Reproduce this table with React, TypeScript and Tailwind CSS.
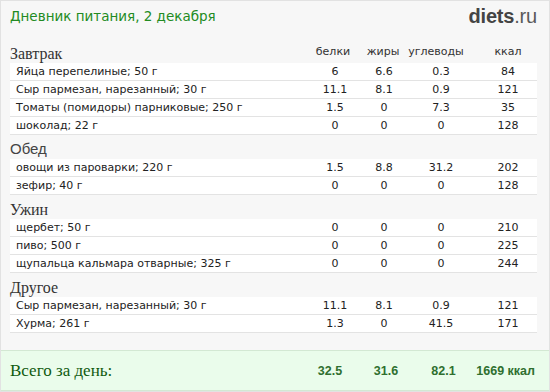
import React from "react";

type Row = { name: string; p: string; f: string; c: string; k: string };
type Section = { title: string; serif: boolean; rows: Row[]; head?: boolean };

const sections: Section[] = [
  {
    title: "Завтрак",
    serif: true,
    head: true,
    rows: [
      { name: "Яйца перепелиные; 50 г", p: "6", f: "6.6", c: "0.3", k: "84" },
      { name: "Сыр пармезан, нарезанный; 30 г", p: "11.1", f: "8.1", c: "0.9", k: "121" },
      { name: "Томаты (помидоры) парниковые; 250 г", p: "1.5", f: "0", c: "7.3", k: "35" },
      { name: "шоколад; 22 г", p: "0", f: "0", c: "0", k: "128" },
    ],
  },
  {
    title: "Обед",
    serif: false,
    rows: [
      { name: "овощи из пароварки; 220 г", p: "1.5", f: "8.8", c: "31.2", k: "202" },
      { name: "зефир; 40 г", p: "0", f: "0", c: "0", k: "128" },
    ],
  },
  {
    title: "Ужин",
    serif: true,
    rows: [
      { name: "щербет; 50 г", p: "0", f: "0", c: "0", k: "210" },
      { name: "пиво; 500 г", p: "0", f: "0", c: "0", k: "225" },
      { name: "щупальца кальмара отварные; 325 г", p: "0", f: "0", c: "0", k: "244" },
    ],
  },
  {
    title: "Другое",
    serif: true,
    rows: [
      { name: "Сыр пармезан, нарезанный; 30 г", p: "11.1", f: "8.1", c: "0.9", k: "121" },
      { name: "Хурма; 261 г", p: "1.3", f: "0", c: "41.5", k: "171" },
    ],
  },
];

const sans = { fontFamily: '"DejaVu Sans", Verdana, sans-serif' };
const arial = { fontFamily: '"Liberation Sans", Arial, sans-serif' };
const serif = { fontFamily: '"Liberation Serif", "Times New Roman", serif' };

export default function App() {
  return (
    <div className="w-[550px] h-[392px] border border-[#e2e2e2] bg-[#f7f7f7] flex flex-col overflow-hidden">
      <div className="h-[38px] flex items-start justify-between pl-[9px] pr-[12px]">
        <div className="text-[13.5px] leading-[18px] pt-[6px] text-[#228b22]" style={sans}>
          Дневник питания, 2 декабря
        </div>
        <div className="text-[20px] leading-[22px] pt-[4px] text-[#444] tracking-[-0.2px]" style={arial}>
          <span className="font-bold">diets</span>
          <span className="text-[#5a5a5a]">.ru</span>
        </div>
      </div>

      {sections.map((s) => (
        <div key={s.title} className="ml-[9px] mr-[12px] flex flex-col">
          <div className="h-[24px] flex items-end">
            <div
              className={
                s.serif
                  ? "flex-1 text-[16px] leading-[16px] text-[#333] pb-[1px]"
                  : "flex-1 text-[15px] leading-[16px] text-[#444] pb-[2px]"
              }
              style={s.serif ? serif : arial}
            >
              {s.title}
            </div>
            {s.head && (
              <div className="flex text-[11px] leading-[14px] text-[#333] pb-[4px]" style={sans}>
                <div className="w-[60px] text-center pr-[4px]">белки</div>
                <div className="w-[38px] text-center pr-[2px]">жиры</div>
                <div className="w-[76px] text-center pr-[10px]">углеводы</div>
                <div className="w-[58px] text-center">ккал</div>
              </div>
            )}
          </div>
          {s.rows.map((r, i) => (
            <div
              key={i}
              className="h-[18px] bg-white border-b border-[#e3e3e3] flex items-center text-[11px] leading-[17px] text-[#222]"
              style={sans}
            >
              <div className="flex-1 pl-[6px] whitespace-nowrap">{r.name}</div>
              <div className="w-[60px] text-center">{r.p}</div>
              <div className="w-[38px] text-center">{r.f}</div>
              <div className="w-[76px] text-center">{r.c}</div>
              <div className="w-[58px] text-center">{r.k}</div>
            </div>
          ))}
        </div>
      ))}

      <div className="mt-[17px] h-[41px] bg-[#eafceb] border-t border-b border-[#d3e8d3] flex items-center pl-[9px] pr-[12px]">
        <div className="flex-1 text-[17px] text-[#0f5a0f] pt-[1px]" style={serif}>
          Всего за день:
        </div>
        <div className="flex text-[12.5px] font-bold text-[#2f6f2f] pt-[2px]" style={arial}>
          <div className="w-[60px] text-center">32.5</div>
          <div className="w-[52px] text-center">31.6</div>
          <div className="w-[63px] text-center">82.1</div>
          <div className="w-[62px] text-right pr-[2px]">1669 ккал</div>
        </div>
      </div>
    </div>
  );
}
